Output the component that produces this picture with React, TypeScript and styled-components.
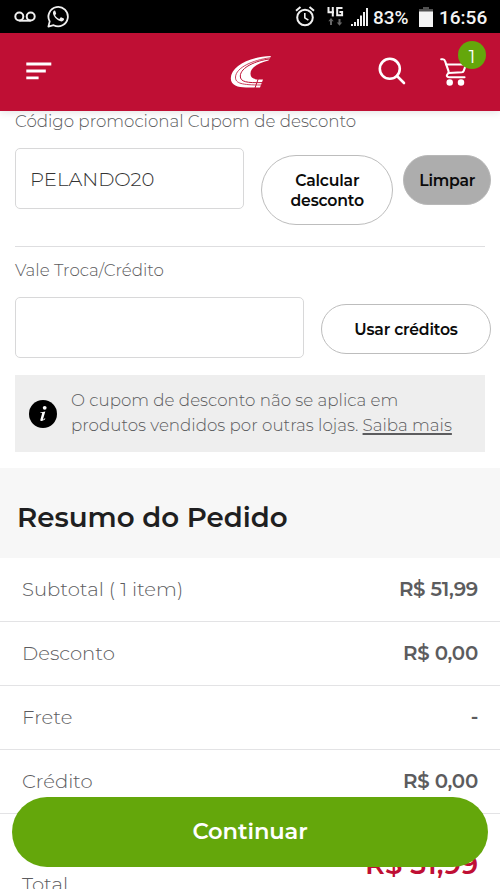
import React from 'react';
import styled, { createGlobalStyle } from 'styled-components';

const GlobalStyle = createGlobalStyle`
  * { box-sizing: border-box; }
  html, body { margin: 0; height: 100%; overflow: hidden; background: #fff; }
  body { font-family: Montserrat, Inter, sans-serif; color: #5c5c5e; }
  button, input { font-family: inherit; margin: 0; }
`;

const Screen = styled.div`
  position: relative;
  width: 500px;
  height: 889px;
  overflow: hidden;
  background: #fff;
`;

const StatusBar = styled.div`
  height: 33px;
  background: #000;
  color: #f4f4f4;
  display: flex;
  align-items: center;
  padding: 0 11px 0 14px;
  font: 500 19px/33px Roboto, sans-serif;
  svg { display: block; flex: none; }
`;

const StatusGroup = styled.div<{ $end?: boolean }>`
  display: flex;
  align-items: center;
  margin-left: ${p => (p.$end ? 'auto' : 0)};
`;

const StatusText = styled.span<{ $width: number; $gap: number }>`
  width: ${p => p.$width}px;
  margin-left: ${p => p.$gap}px;
  padding-top: 2px;
  white-space: nowrap;
`;

const Gap = styled.span<{ $w: number }>`
  width: ${p => p.$w}px;
`;

const NavBar = styled.header`
  position: relative;
  z-index: 1;
  height: 78px;
  padding: 0 32px 0 26px;
  background: #bf0f34;
  box-shadow: 0 1px 8px rgba(0, 0, 0, 0.12);
  display: grid;
  grid-template-columns: 204px 1fr auto;
  align-items: center;
  svg { display: block; }
`;

const NavActions = styled.div`
  display: flex;
  align-items: center;
  gap: 34px;
`;

const Cart = styled.div`
  position: relative;
`;

const Badge = styled.span`
  position: absolute;
  left: 18px;
  top: -17px;
  width: 28px;
  height: 28px;
  border-radius: 50%;
  background: #64a70b;
  color: #fff;
  font-size: 18px;
  line-height: 33px;
  text-align: center;
`;

const Form = styled.main`
  height: 357px;
  padding: 0 9px 0 15px;
`;

const Label = styled.label<{ $first?: boolean }>`
  display: block;
  height: ${p => (p.$first ? 37 : 50)}px;
  padding-top: ${p => (p.$first ? 0 : 13)}px;
  font-size: 16.7px;
  font-weight: 300;
  line-height: 21px;
`;

const FieldRow = styled.div`
  display: flex;
  align-items: flex-start;
`;

const Input = styled.input<{ $width: number }>`
  width: ${p => p.$width}px;
  height: 61px;
  padding: 0 14px;
  border: 1px solid #d8d8d9;
  border-radius: 5px;
  background: #fff;
  color: #333;
  font-size: 19.6px;
  font-weight: 300;
  outline: none;
`;

const PillButton = styled.button<{ $width: number; $height: number; $gap: number; $muted?: boolean }>`
  width: ${p => p.$width}px;
  height: ${p => p.$height}px;
  margin: 7px 0 0 ${p => p.$gap}px;
  padding: 1px ${p => (p.$muted ? 0 : 20)}px 0;
  border: 1.5px solid ${p => (p.$muted ? '#b8b8b8' : '#bdbdbd')};
  border-radius: 35px;
  background: ${p => (p.$muted ? '#adadad' : '#fff')};
  color: #0b0b0b;
  font-size: 15.7px;
  font-weight: 600;
  letter-spacing: -0.2px;
  line-height: 19.5px;
`;

const Divider = styled.div`
  margin: 21px 6px 0 0;
  height: 1px;
  background: #dedee0;
`;

const Notice = styled.div`
  display: flex;
  align-items: center;
  width: 470px;
  height: 77px;
  margin-top: 17px;
  padding-left: 14px;
  background: #eee;
  svg { flex: none; }
`;

const NoticeText = styled.p`
  margin: 0 0 2px 14px;
  font-size: 16.7px;
  font-weight: 300;
  line-height: 25px;
  white-space: nowrap;
`;

const MoreLink = styled.a`
  text-decoration: underline;
  text-decoration-thickness: 1.5px;
  text-underline-offset: 2px;
`;

const SummaryTitle = styled.h2`
  height: 90px;
  margin: 0;
  padding: 10px 17px 0;
  background: #f7f7f7;
  color: #1f1f21;
  font-size: 27.7px;
  font-weight: 600;
  line-height: 79px;
`;

const SummaryRow = styled.div`
  display: flex;
  justify-content: space-between;
  align-items: center;
  height: 64px;
  padding: 0 22px 1px;
  border-bottom: 1.5px solid #e3e3e5;
  font-size: 19.6px;
  font-weight: 300;
`;

const Amount = styled.span`
  font-size: 19.8px;
  font-weight: 600;
  letter-spacing: -0.25px;
`;

const TotalRow = styled.div`
  display: flex;
  justify-content: space-between;
  align-items: flex-start;
  padding: 0 22px;
  font-size: 19.6px;
  font-weight: 300;
  line-height: 24px;
`;

const TotalLabel = styled.span`
  padding-top: 58px;
`;

const TotalAmount = styled.span`
  padding-top: 38px;
  color: #bf0f34;
  font-size: 27.6px;
  font-weight: 600;
`;

const ContinueButton = styled.button`
  position: absolute;
  left: 12px;
  top: 797px;
  width: 476px;
  height: 70px;
  border: 0;
  border-radius: 35px;
  background: #64a70b;
  color: #fff;
  font-size: 22.6px;
  font-weight: 600;
  letter-spacing: -0.1px;
  padding-bottom: 3px;
`;

const rows: [string, string][] = [
  ['Subtotal ( 1 item)', 'R$ 51,99'],
  ['Desconto', 'R$ 0,00'],
  ['Frete', '-'],
  ['Crédito', 'R$ 0,00'],
];

const Voicemail = () => (
  <svg width="22" height="12" viewBox="0 0 22 12" fill="none" stroke="#f0f0f0" strokeWidth="2">
    <circle cx="5.3" cy="5.5" r="4" />
    <circle cx="16.7" cy="5.5" r="4" />
    <path d="M5.3 9.7h11.4" />
  </svg>
);

const WhatsApp = () => (
  <svg width="23" height="23" viewBox="0 0 23 23" fill="none">
    <path d="M1.4 21.6l1.3-5.2A9.7 9.7 0 1 1 6.6 20.2z" stroke="#f0f0f0" strokeWidth="1.8" strokeLinejoin="round" />
    <path d="M8.3 6.1c-.4-.8-1.2-.6-1.7 0-1.2 1.4-.5 3.4.4 4.9 1.4 2.3 3.4 4.2 5.9 5.1 1.9.7 3.7.1 4.1-1.5.2-.8 0-1-.6-1.3l-1.9-.9c-.5-.2-.8-.1-1.1.3l-.8 1c-.3.3-.6.3-1 .1-1.5-.8-2.6-1.8-3.4-3.2-.2-.4-.1-.6.2-.9.7-.8.9-1 .6-1.7z" fill="#f0f0f0" />
  </svg>
);

const Alarm = () => (
  <svg width="20" height="21" viewBox="0 0 20 21" fill="none" stroke="#f0f0f0">
    <circle cx="10" cy="11.5" r="7.8" strokeWidth="2" />
    <path d="M1 4.7L5.5 1M19 4.7L14.5 1" strokeWidth="2" />
    <path d="M9.800 7v4.800l3.600 2.300" strokeWidth="1.6" />
  </svg>
);

const Network = () => (
  <svg width="17" height="20" viewBox="0 0 17 20" fill="none">
    <path d="M1.500 0v5.300H7M5.800 0v9.500M15.500 1.100h-5.300v7.200h4.900V5h-2.700" stroke="#f0f0f0" strokeWidth="2" />
    <path d="M4 18v-5M12.500 12v5" stroke="#666" strokeWidth="2" />
    <path d="M1.300 14.200L4 11l2.700 3.200zM9.800 15.500l2.700 3.200 2.700-3.200z" fill="#666" />
  </svg>
);

const Signal = () => (
  <svg width="17" height="18" viewBox="0 0 17 18" fill="#f0f0f0">
    <path d="M0 16h2v2H0zM3 14h2v4H3zM6 11h2v7H6zM9 7.500h2V18H9zM12 4h2v14h-2zM15 0h2v18h-2z" />
  </svg>
);

const Battery = () => (
  <svg width="14" height="20" viewBox="0 0 14 20">
    <path d="M4 0h6v2h4v3H0V2h4z" fill="#505050" />
    <path d="M0 4.500h14V20H0z" fill="#f4f4f4" />
  </svg>
);

const Menu = () => (
  <svg width="26" height="20" viewBox="0 0 26 20" stroke="#fff" strokeWidth="2.8">
    <path d="M.3 2h25M.3 9h19.500M.3 15.800h12.300" />
  </svg>
);

const Logo = () => (
  <svg width="42" height="34" viewBox="0 0 42 34">
    <path d="M41 1C20 1.500 1 11 .8 23.200.7 30.500 8 32.500 16 32.500l14 0 3-8c-8 .5-12.500-1-12.500-5.500C20 13 28 8 38.500 5.500z" fill="#fff" />
    <g fill="none" stroke="#bf0f34" strokeWidth="1">
      <path d="M40 2.800C23 5 6 12.500 5.500 22 5.200 28.500 12 30 31 30" strokeWidth=".8" />
      <path d="M39.500 4C26 5.500 10.500 12.500 10.300 21 10.200 27 17 28 32 27.600" />
      <path d="M28.500 23l-3.500 10" />
    </g>
  </svg>
);

const Search = () => (
  <svg width="28" height="30" viewBox="0 0 28 30" fill="none" stroke="#fff" strokeWidth="2.6" strokeLinecap="round">
    <circle cx="11.8" cy="11.8" r="10" />
    <path d="M19 19l7 7" />
  </svg>
);

const CartIcon = () => (
  <svg width="28" height="28" viewBox="0 0 28 28" fill="none" stroke="#fff" strokeWidth="2.1" strokeLinecap="round" strokeLinejoin="round">
    <path d="M1.200 1.200h1.600c1.300 0 1.900.6 2.300 1.900l3.500 10.200c.4 1.300 0 1.900-.9 2.700-1.600 1.600-.9 3.200 1.300 3.200h15.500" />
    <path d="M6.200 6.500H26l-2.300 6.300c-.3.900-.8 1.300-1.800 1.400L8.800 15" />
    <circle cx="9.7" cy="24.500" r="2.2" fill="#fff" />
    <circle cx="21" cy="24.500" r="2.2" fill="#fff" />
  </svg>
);

const Info = () => (
  <svg width="28" height="28" viewBox="0 0 28 28">
    <circle cx="14" cy="14" r="14" fill="#000" />
    <circle cx="15.7" cy="7.8" r="1.9" fill="#fff" />
    <path d="M11.300 12.400l5-1-2.200 7.600c-.2.900.4.700 1.700-.7l.6.500c-1.600 2.200-5.600 3.400-5 .7l1.700-5.900c.2-.7-.3-.8-1.800-.6z" fill="#fff" />
  </svg>
);

export default function App() {
  return (
    <Screen>
      <GlobalStyle />
      <StatusBar>
        <StatusGroup>
          <Voicemail />
          <Gap $w={11} />
          <WhatsApp />
        </StatusGroup>
        <StatusGroup $end>
          <Alarm />
          <Gap $w={12} />
          <Network />
          <Gap $w={7} />
          <Signal />
          <StatusText $width={37} $gap={5}>83%</StatusText>
          <Gap $w={9} />
          <Battery />
          <StatusText $width={50} $gap={6}>16:56</StatusText>
        </StatusGroup>
      </StatusBar>
      <NavBar>
        <Menu />
        <Logo />
        <NavActions>
          <Search />
          <Cart>
            <CartIcon />
            <Badge>1</Badge>
          </Cart>
        </NavActions>
      </NavBar>
      <Form>
        <Label $first htmlFor="coupon">Código promocional Cupom de desconto</Label>
        <FieldRow>
          <Input id="coupon" $width={229} defaultValue="PELANDO20" />
          <PillButton $width={133} $height={70} $gap={17}>Calcular desconto</PillButton>
          <PillButton $width={88} $height={50} $gap={10} $muted>Limpar</PillButton>
        </FieldRow>
        <Divider />
        <Label htmlFor="credit">Vale Troca/Crédito</Label>
        <FieldRow>
          <Input id="credit" $width={289} />
          <PillButton $width={171} $height={50} $gap={17}>Usar créditos</PillButton>
        </FieldRow>
        <Notice>
          <Info />
          <NoticeText>
            O cupom de desconto não se aplica em<br />
            produtos vendidos por outras lojas. <MoreLink>Saiba mais</MoreLink>
          </NoticeText>
        </Notice>
      </Form>
      <SummaryTitle>Resumo do Pedido</SummaryTitle>
      {rows.map(([name, value]) => (
        <SummaryRow key={name}>
          <span>{name}</span>
          <Amount>{value}</Amount>
        </SummaryRow>
      ))}
      <TotalRow>
        <TotalLabel>Total</TotalLabel>
        <TotalAmount>R$ 51,99</TotalAmount>
      </TotalRow>
      <ContinueButton>Continuar</ContinueButton>
    </Screen>
  );
}
